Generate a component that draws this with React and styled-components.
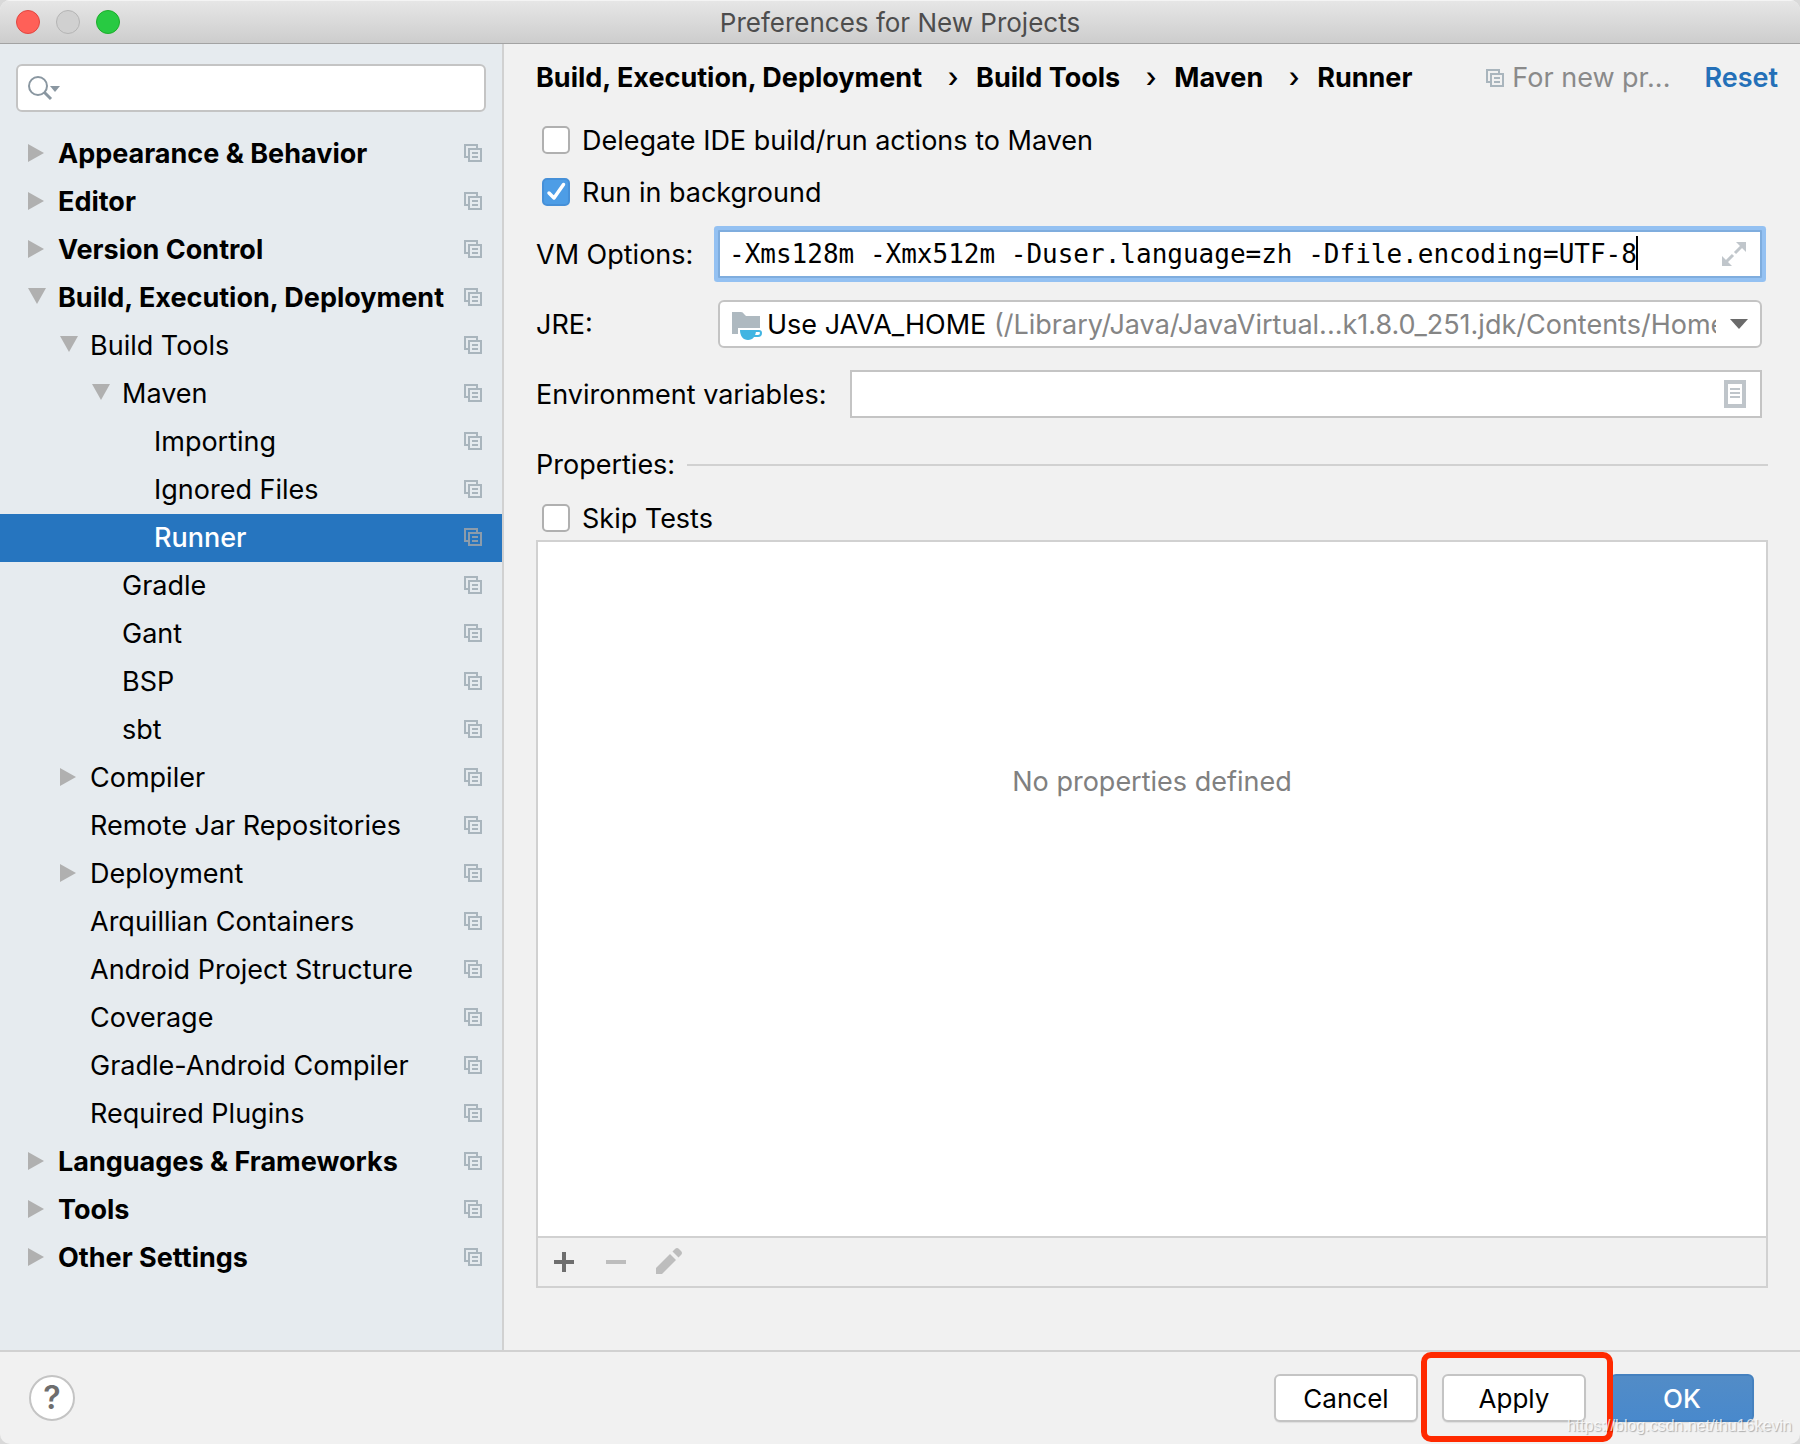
import React, { useState } from "react";
import styled, { createGlobalStyle, css } from "styled-components";

const UI_FONT = `Inter, "Liberation Sans", sans-serif`;
const MONO_FONT = `"DejaVu Sans Mono", "Liberation Mono", monospace`;
const LINE = "#d1d1d1";
const FIELD_LINE = "#c4c4c4";

const GlobalStyle = createGlobalStyle`
  *, *::before, *::after { box-sizing: border-box; }
  body { margin: 0; background: #d9d9d9; }
  button, input, select { font: inherit; color: inherit; margin: 0; }
`;

const Window = styled.div`
  display: flex;
  flex-direction: column;
  min-height: 100vh;
  overflow: hidden;
  border-radius: 10px;
  background: #f1f1f1;
  color: #000;
  font: 400 27px/30px ${UI_FONT};
`;

const TitleBar = styled.header`
  display: grid;
  grid-template-columns: 1fr auto 1fr;
  align-items: center;
  height: 44px;
  padding: 0 16px;
  border-top: 1px solid #f4f4f4;
  border-bottom: 1px solid #a3a3a3;
  background: linear-gradient(#e6e6e6, #cdcdcd);
`;

const WindowTitle = styled.h1`
  margin: 0;
  padding-top: 2px;
  color: #4d4d4d;
  font-size: 26px;
  font-weight: 400;
`;

const Lights = styled.div`
  display: flex;
  gap: 16px;
`;

const Light = styled.button`
  width: 24px;
  height: 24px;
  padding: 0;
  border: 1px solid ${(p) => p.$rim};
  border-radius: 50%;
  background: ${(p) => p.$fill};
`;

const Body = styled.div`
  display: flex;
  flex: 1;
`;

const Sidebar = styled.nav`
  flex: 0 0 504px;
  min-width: 0;
  padding: 20px 0 68px;
  border-right: 2px solid ${LINE};
  background: #e6ebef;
`;

const SearchField = styled.label`
  display: flex;
  align-items: center;
  height: 48px;
  margin: 0 16px 18px;
  padding: 0 10px;
  gap: 8px;
  border: 2px solid ${FIELD_LINE};
  border-radius: 6px;
  background: #fff;
`;

const BareInput = styled.input`
  flex: 1;
  min-width: 0;
  height: 100%;
  padding: 0;
  border: 0;
  outline: 0;
  background: transparent;
`;

const Tree = styled.ul`
  margin: 0;
  padding: 0;
  list-style: none;
`;

const TreeRow = styled.li`
  display: flex;
  align-items: center;
  height: 48px;
  padding: 0 20px 2px ${(p) => 28 + p.$level * 32}px;
  font-weight: ${(p) => (p.$level === 0 ? 700 : 400)};
  white-space: nowrap;
  ${(p) =>
    p.$selected &&
    css`
      background: #2675bf;
      color: #fff;
      font-weight: 500;
    `}
`;

const ArrowSlot = styled.span`
  display: flex;
  flex: 0 0 30px;
`;

const TreeLabel = styled.span`
  flex: 1;
  padding-top: 2px;
`;

const Main = styled.main`
  display: flex;
  flex: 1;
  flex-direction: column;
  min-width: 0;
  padding: 0 32px 62px;
`;

const Header = styled.div`
  display: flex;
  align-items: center;
  height: 66px;
  margin: 0 -10px 4px 0;
  padding-top: 2px;
  white-space: nowrap;
`;

const Crumbs = styled.ol`
  display: flex;
  flex: 1;
  margin: 0;
  padding: 0;
  list-style: none;
  font-weight: 700;
`;

const Crumb = styled.li`
  display: flex;
  align-items: center;
  & + &::before {
    content: "›";
    width: 54px;
    padding-left: 8px;
    text-align: center;
    font-weight: 500;
  }
`;

const Scope = styled.span`
  display: flex;
  align-items: center;
  gap: 8px;
  margin-right: 34px;
  color: #8a8a8a;
`;

const ResetLink = styled.a`
  color: #2470b8;
  font-weight: 600;
  text-decoration: none;
`;

const CheckRow = styled.label`
  display: flex;
  align-items: center;
  align-self: flex-start;
  height: ${(p) => (p.$compact ? 44 : 52)}px;
  padding-left: 6px;
  gap: 12px;
`;

const CheckText = styled.span`
  padding-top: 2px;
`;

const CheckBox = styled.span`
  display: grid;
  width: 28px;
  height: 28px;
  & > * {
    grid-area: 1 / 1;
  }
`;

const CheckInput = styled.input`
  width: 28px;
  height: 28px;
  appearance: none;
  border: 2px solid #b0b0b0;
  border-radius: 5px;
  background: #fff;
  &:checked {
    border-color: #4690d8;
    background: #4d9de6;
  }
  & + svg {
    visibility: hidden;
    pointer-events: none;
  }
  &:checked + svg {
    visibility: visible;
  }
`;

const Fields = styled.div`
  display: flex;
  flex-direction: column;
  gap: 22px;
  padding: 12px 6px 0 0;
`;

const FieldRow = styled.div`
  display: flex;
  align-items: center;
`;

const FieldLabel = styled.label`
  flex: 0 0 ${(p) => (p.$wide ? 314 : 182)}px;
  padding-top: 2px;
`;

const FieldBox = styled.div`
  position: relative;
  display: flex;
  flex: 1;
  align-items: center;
  min-width: 0;
  height: 48px;
  padding: 0 14px 0 9px;
  border: 2px solid ${FIELD_LINE};
  background: #fff;
  ${(p) =>
    p.$combo &&
    css`
      padding: 0 12px;
      border-radius: 6px;
    `}
  ${(p) =>
    p.$focused &&
    css`
      border-color: #7fadde;
      border-radius: 1px;
      box-shadow: 0 0 0 4px #94c1f2;
      font-family: ${MONO_FONT};
      font-size: 26px;
    `}
`;

const Caret = styled.span`
  position: absolute;
  top: 4px;
  left: calc(8px + ${(p) => p.$chars}ch);
  width: 2px;
  height: 34px;
  background: #000;
`;

const IconButton = styled.button`
  display: flex;
  padding: 0;
  border: 0;
  background: transparent;
`;

const ComboText = styled.span`
  flex: 1;
  min-width: 0;
  margin: 0 14px 0 5px;
  padding-top: 2px;
  overflow: hidden;
  white-space: nowrap;
`;

const Muted = styled.span`
  color: #858585;
`;

const ComboSelect = styled.select`
  position: absolute;
  inset: 0;
  width: 100%;
  height: 100%;
  opacity: 0;
`;

const SectionTitle = styled.h2`
  display: flex;
  align-items: center;
  gap: 12px;
  margin: 32px 0 16px;
  font-size: 27px;
  font-weight: 400;
  &::after {
    content: "";
    flex: 1;
    height: 2px;
    background: ${LINE};
  }
`;

const Panel = styled.section`
  display: flex;
  flex: 1;
  flex-direction: column;
  border: 2px solid ${LINE};
`;

const EmptyList = styled.div`
  flex: 1;
  padding-top: 225px;
  background: #fff;
  color: #808080;
  text-align: center;
`;

const Toolbar = styled.div`
  display: flex;
  align-items: center;
  height: 50px;
  padding: 0 12px;
  gap: 24px;
  border-top: 2px solid ${LINE};
`;

const Footer = styled.footer`
  display: flex;
  align-items: center;
  height: 94px;
  padding: 0 46px 0 29px;
  border-top: 2px solid ${LINE};
`;

const HelpButton = styled.button`
  width: 46px;
  height: 46px;
  margin-right: auto;
  padding: 0;
  border: 2px solid ${FIELD_LINE};
  border-radius: 50%;
  background: #fff;
  color: #6e6e6e;
  font-size: 32px;
  font-weight: 600;
`;

const Actions = styled.div`
  display: flex;
  gap: 24px;
`;

const ActionButton = styled.button`
  width: 144px;
  height: 48px;
  padding: 2px 0 0;
  border: 2px solid ${(p) => (p.$primary ? "#4581bf" : FIELD_LINE)};
  border-radius: 6px;
  background: ${(p) => (p.$primary ? "linear-gradient(#528cc7, #4989cc)" : "#fff")};
  color: ${(p) => (p.$primary ? "#fff" : "#000")};
  font-size: 26px;
  font-weight: ${(p) => (p.$primary ? 500 : 400)};
  box-shadow: 0 1px 1px rgba(0, 0, 0, 0.08);
`;

const Marked = styled.div`
  position: relative;
  display: flex;
  &::after {
    content: "";
    position: absolute;
    z-index: 1;
    inset: -22px -27px -20px -21px;
    border: 6px solid #ff2a00;
    border-radius: 10px;
    pointer-events: none;
  }
`;

const Watermark = styled.span`
  position: absolute;
  z-index: 2;
  right: 8px;
  bottom: 4px;
  color: rgba(255, 255, 255, 0.75);
  font: 400 16px/28px "Liberation Sans", sans-serif;
  text-shadow: 1px 1px 1px rgba(0, 0, 0, 0.28);
  pointer-events: none;
`;

const CopyIcon = ({ color = "#a9b5bd" }) => (
  <svg width="18" height="18" viewBox="0 0 18 18" fill="none" stroke={color} strokeWidth="2" aria-hidden="true">
    <path d="M13 4V1H1V13H4" />
    <rect x="5" y="5" width="12" height="12" />
    <path d="M8 9H14M8 13H14" />
  </svg>
);

const Arrow = ({ open }) =>
  open ? (
    <svg width="18" height="18" viewBox="0 0 18 18" fill="#b0b0b0" aria-hidden="true">
      <path d="M0 0H18L9 16Z" />
    </svg>
  ) : (
    <svg width="16" height="18" viewBox="0 0 16 18" fill="#b0b0b0" aria-hidden="true">
      <path d="M0 0L16 9L0 18Z" />
    </svg>
  );

const SearchIcon = () => (
  <svg width="34" height="26" viewBox="0 0 34 26" fill="none" aria-hidden="true">
    <circle cx="10" cy="11" r="9" stroke="#8a97a1" strokeWidth="2" />
    <path d="M16 17L23 24" stroke="#8a97a1" strokeWidth="3" />
    <path d="M22 11H32L27 17Z" fill="#8a97a1" />
  </svg>
);

const CheckMark = () => (
  <svg width="28" height="28" viewBox="0 0 28 28" fill="none" aria-hidden="true">
    <path d="M7 15L12 20L21.5 6.5" stroke="#fff" strokeWidth="3.5" strokeLinecap="round" strokeLinejoin="round" />
  </svg>
);

const ExpandIcon = () => (
  <svg width="24" height="24" viewBox="0 0 24 24" fill="#c0c6cb" aria-hidden="true">
    <path d="M14 0H24V10Z" />
    <path d="M0 14V24H10Z" />
    <path d="M20 4L13 11M11 13L4 20" stroke="#c0c6cb" strokeWidth="3" />
  </svg>
);

const DocumentIcon = () => (
  <svg width="22" height="28" viewBox="0 0 22 28" fill="none" aria-hidden="true">
    <rect x="2" y="2" width="18" height="24" stroke="#bfc5ca" strokeWidth="4" />
    <path d="M6 9H16M6 13H16M6 17H16" stroke="#bfc5ca" strokeWidth="2" />
  </svg>
);

const JdkIcon = () => (
  <svg width="30" height="32" viewBox="0 0 30 32" aria-hidden="true">
    <path d="M0 4H9Q11 4 12 6L14 8H28V20H6V26H0Z" fill="#aeb9c0" />
    <path d="M8 22H24C24 28 21 32 16 32C11 32 8 28 8 22Z" fill="#41b5e2" />
    <path d="M22 23H27Q29 23 29 25Q29 28 26 28H22" fill="none" stroke="#41b5e2" strokeWidth="2" />
  </svg>
);

const ComboArrow = () => (
  <svg width="18" height="10" viewBox="0 0 18 10" fill="#6a6a6a" aria-hidden="true">
    <path d="M0 0H18L9 10Z" />
  </svg>
);

const AddIcon = () => (
  <svg width="28" height="28" viewBox="0 0 28 28" stroke="#6e6e6e" strokeWidth="4" aria-hidden="true">
    <path d="M14 4V24M4 14H24" />
  </svg>
);

const RemoveIcon = () => (
  <svg width="28" height="28" viewBox="0 0 28 28" stroke="#bdbdbd" strokeWidth="4" aria-hidden="true">
    <path d="M4 14H24" />
  </svg>
);

const EditIcon = () => (
  <svg width="28" height="28" viewBox="0 0 28 28" fill="#bdbdbd" aria-hidden="true">
    <path d="M2 26V20L16 6L22 12L8 26Z" />
    <path d="M18.5 3.5L21 1Q23 -1 25 1L27 3Q29 5 27 7L24.5 9.5Z" />
  </svg>
);

const TREE = [
  { label: "Appearance & Behavior", level: 0, arrow: "closed" },
  { label: "Editor", level: 0, arrow: "closed" },
  { label: "Version Control", level: 0, arrow: "closed" },
  { label: "Build, Execution, Deployment", level: 0, arrow: "open" },
  { label: "Build Tools", level: 1, arrow: "open" },
  { label: "Maven", level: 2, arrow: "open" },
  { label: "Importing", level: 3 },
  { label: "Ignored Files", level: 3 },
  { label: "Runner", level: 3, selected: true },
  { label: "Gradle", level: 2 },
  { label: "Gant", level: 2 },
  { label: "BSP", level: 2 },
  { label: "sbt", level: 2 },
  { label: "Compiler", level: 1, arrow: "closed" },
  { label: "Remote Jar Repositories", level: 1 },
  { label: "Deployment", level: 1, arrow: "closed" },
  { label: "Arquillian Containers", level: 1 },
  { label: "Android Project Structure", level: 1 },
  { label: "Coverage", level: 1 },
  { label: "Gradle-Android Compiler", level: 1 },
  { label: "Required Plugins", level: 1 },
  { label: "Languages & Frameworks", level: 0, arrow: "closed" },
  { label: "Tools", level: 0, arrow: "closed" },
  { label: "Other Settings", level: 0, arrow: "closed" },
];

const Check = ({ label, initial = false, compact }) => {
  const [on, setOn] = useState(initial);
  return (
    <CheckRow $compact={compact}>
      <CheckBox>
        <CheckInput type="checkbox" checked={on} onChange={(e) => setOn(e.target.checked)} />
        <CheckMark />
      </CheckBox>
      <CheckText>{label}</CheckText>
    </CheckRow>
  );
};

export default function App() {
  const [vmOptions, setVmOptions] = useState("-Xms128m -Xmx512m -Duser.language=zh -Dfile.encoding=UTF-8");

  return (
    <Window>
      <GlobalStyle />
      <TitleBar>
        <Lights>
          <Light aria-label="Close" $fill="#ff6058" $rim="#e14640" />
          <Light aria-label="Minimize" $fill="#d0d0d0" $rim="#b4b4b4" />
          <Light aria-label="Zoom" $fill="#28ca42" $rim="#1dad2b" />
        </Lights>
        <WindowTitle>Preferences for New Projects</WindowTitle>
      </TitleBar>

      <Body>
        <Sidebar>
          <SearchField>
            <SearchIcon />
            <BareInput type="text" aria-label="Search settings" />
          </SearchField>
          <Tree>
            {TREE.map((item) => (
              <TreeRow key={item.label} $level={item.level} $selected={item.selected}>
                <ArrowSlot>{item.arrow && <Arrow open={item.arrow === "open"} />}</ArrowSlot>
                <TreeLabel>{item.label}</TreeLabel>
                <CopyIcon color={item.selected ? "#8c9cab" : undefined} />
              </TreeRow>
            ))}
          </Tree>
        </Sidebar>

        <Main>
          <Header>
            <Crumbs>
              <Crumb>Build, Execution, Deployment</Crumb>
              <Crumb>Build Tools</Crumb>
              <Crumb>Maven</Crumb>
              <Crumb>Runner</Crumb>
            </Crumbs>
            <Scope>
              <CopyIcon />
              For new pr...
            </Scope>
            <ResetLink href="#reset">Reset</ResetLink>
          </Header>

          <Check label="Delegate IDE build/run actions to Maven" />
          <Check label="Run in background" initial />

          <Fields>
            <FieldRow>
              <FieldLabel htmlFor="vm-options">VM Options:</FieldLabel>
              <FieldBox $focused>
                <BareInput
                  id="vm-options"
                  type="text"
                  value={vmOptions}
                  onChange={(e) => setVmOptions(e.target.value)}
                />
                <Caret $chars={vmOptions.length} />
                <IconButton aria-label="Expand">
                  <ExpandIcon />
                </IconButton>
              </FieldBox>
            </FieldRow>
            <FieldRow>
              <FieldLabel htmlFor="jre">JRE:</FieldLabel>
              <FieldBox $combo>
                <JdkIcon />
                <ComboText aria-hidden="true">
                  Use JAVA_HOME <Muted>(/Library/Java/JavaVirtual...k1.8.0_251.jdk/Contents/Home)</Muted>
                </ComboText>
                <ComboArrow />
                <ComboSelect id="jre">
                  <option>Use JAVA_HOME</option>
                </ComboSelect>
              </FieldBox>
            </FieldRow>
            <FieldRow>
              <FieldLabel htmlFor="env" $wide>
                Environment variables:
              </FieldLabel>
              <FieldBox>
                <BareInput id="env" type="text" />
                <IconButton aria-label="Edit environment variables">
                  <DocumentIcon />
                </IconButton>
              </FieldBox>
            </FieldRow>
          </Fields>

          <SectionTitle>Properties:</SectionTitle>
          <Check label="Skip Tests" compact />
          <Panel>
            <EmptyList>No properties defined</EmptyList>
            <Toolbar>
              <IconButton aria-label="Add">
                <AddIcon />
              </IconButton>
              <IconButton aria-label="Remove">
                <RemoveIcon />
              </IconButton>
              <IconButton aria-label="Edit">
                <EditIcon />
              </IconButton>
            </Toolbar>
          </Panel>
        </Main>
      </Body>

      <Footer>
        <HelpButton aria-label="Help">?</HelpButton>
        <Actions>
          <ActionButton>Cancel</ActionButton>
          <Marked>
            <ActionButton>Apply</ActionButton>
          </Marked>
          <ActionButton $primary>OK</ActionButton>
        </Actions>
        <Watermark>https://blog.csdn.net/thu16kevin</Watermark>
      </Footer>
    </Window>
  );
}
